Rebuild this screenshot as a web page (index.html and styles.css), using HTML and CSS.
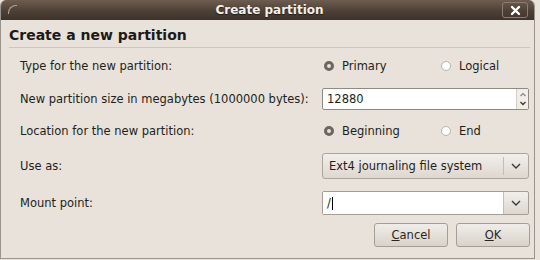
FILE: index.html
```html
<!DOCTYPE html>
<html lang="en">
  <head>
    <meta charset="UTF-8" />
    <title>Create partition</title>
    <link rel="stylesheet" href="styles.css">
  </head>
  <body>
    <div class="window">
      <div class="titlebar">
        <span class="corner"></span>
        <span class="title">Create partition</span>
        <span class="close">
          <svg width="11" height="11" viewBox="0 0 11 11">
            <path d="M2 2 L9 9 M9 2 L2 9" stroke="#fff" stroke-width="2.4" stroke-linecap="round" />
          </svg>
        </span>
      </div>
      <div class="content">
        <h1>Create a new partition</h1>
        <div class="form">
          <div class="label">Type for the new partition:</div>
          <div class="control radios">
            <label class="radio"><span class="dot on"></span>Primary</label>
            <label class="radio"><span class="dot"></span>Logical</label>
          </div>

          <div class="label">New partition size in megabytes (1000000 bytes):</div>
          <div class="control">
            <div class="spin">
              <span class="value">12880</span>
              <span class="arrows">
                <svg width="8" height="18" viewBox="0 0 8 18">
                  <path d="M1.5 6 L4 3.5 L6.5 6" fill="none" stroke="#8a867f" stroke-width="1.2" />
                  <path d="M1.5 12 L4 14.5 L6.5 12" fill="none" stroke="#3c3a36" stroke-width="1.4" />
                </svg>
              </span>
            </div>
          </div>

          <div class="label">Location for the new partition:</div>
          <div class="control radios">
            <label class="radio"><span class="dot on"></span>Beginning</label>
            <label class="radio"><span class="dot"></span>End</label>
          </div>

          <div class="label">Use as:</div>
          <div class="control">
            <div class="combo">
              <span class="value">Ext4 journaling file system</span>
              <span class="drop">
                <svg width="10" height="6" viewBox="0 0 10 6">
                  <path d="M1 1 L5 5 L9 1" fill="none" stroke="#3c3a36" stroke-width="1.4" />
                </svg>
              </span>
            </div>
          </div>

          <div class="label">Mount point:</div>
          <div class="control">
            <div class="entry-combo">
              <span class="value">/<span class="caret"></span></span>
              <span class="drop">
                <svg width="10" height="6" viewBox="0 0 10 6">
                  <path d="M1 1 L5 5 L9 1" fill="none" stroke="#3c3a36" stroke-width="1.4" />
                </svg>
              </span>
            </div>
          </div>
        </div>
        <div class="buttons">
          <button class="btn"><u>C</u>ancel</button>
          <button class="btn"><u>O</u>K</button>
        </div>
      </div>
    </div>
  </body>
</html>
```

FILE: styles.css
```css
body {
  margin: 0;
  background: #e9e3db;
  font-family: "DejaVu Sans", sans-serif;
  color: #221f1b;
}
.window {
  width: 533px;
  height: 258px;
  border: 1px solid #9a948c;
  border-top: none;
  border-radius: 6px 6px 0 0;
  background: #e8e2da;
  overflow: hidden;
}
.titlebar {
  height: 20px;
  position: relative;
  background: linear-gradient(#6e5d50, #4d4036 55%, #3e332b);
  display: flex;
  align-items: center;
  justify-content: center;
}
.corner {
  position: absolute;
  left: 7px;
  top: 5px;
  width: 8px;
  height: 8px;
  border-top: 1px solid #b0a498;
  border-left: 1px solid #b0a498;
  border-radius: 8px 0 0 0;
}
.title {
  color: #f4f0ea;
  font-weight: bold;
  font-size: 12px;
  text-shadow: 0 1px 1px #201a15;
  margin-left: 4px;
}
.close {
  position: absolute;
  right: 6px;
  top: 2px;
  width: 26px;
  height: 16px;
  border: 1px solid #8c7d70;
  border-radius: 3px;
  box-sizing: border-box;
  display: flex;
  align-items: center;
  justify-content: center;
}
.content {
  padding: 0 4px 0 8px;
}
h1 {
  margin: 0;
  padding-top: 7px;
  font-size: 14px;
  height: 20px;
  color: #1c1a17;
  border-bottom: 1px solid #cdc6bd;
}
.form {
  display: grid;
  grid-template-columns: 313px 207px;
  grid-template-rows: 31px 35px 29px 41px 34px;
  align-items: center;
  font-size: 11.5px;
  margin-top: 2px;
}
.label {
  padding-left: 11px;
  white-space: nowrap;
}
.radios {
  display: flex;
}
.radio {
  display: flex;
  align-items: center;
  flex: 0 0 115px;
  padding-left: 2px;
}
.dot {
  width: 10px;
  height: 10px;
  border-radius: 50%;
  border: 1px solid #bab3aa;
  background: #fff;
  box-sizing: border-box;
  margin-right: 8px;
}
.dot.on {
  border: 3px solid #6b665f;
  background: #e6e1da;
}
.spin,
.entry-combo,
.combo {
  display: flex;
  align-items: stretch;
  box-sizing: border-box;
}
.spin {
  height: 22px;
  border: 1px solid #8f8a83;
  border-radius: 2px;
  background: #fff;
}
.spin .value,
.entry-combo .value {
  flex: 1;
  padding-left: 4px;
  display: flex;
  align-items: center;
}
.arrows {
  width: 11px;
  border-left: 1px solid #d3cec7;
  background: #f1eeea;
  display: flex;
  align-items: center;
  justify-content: center;
}
.combo {
  height: 26px;
  border: 1px solid #aca59c;
  border-radius: 3px;
  background: linear-gradient(#f2efeb, #ddd7cf);
}
.combo .value {
  flex: 1;
  padding-left: 6px;
  display: flex;
  align-items: center;
}
.drop {
  width: 24px;
  display: flex;
  align-items: center;
  justify-content: center;
  border-left: 1px solid #c4bdb4;
  margin: 3px 0;
}
.entry-combo {
  height: 24px;
  border: 1px solid #a49e96;
  border-radius: 2px;
  background: linear-gradient(#f2efeb, #ddd7cf);
}
.entry-combo .value {
  background: #fff;
  border-right: 1px solid #c4bdb4;
}
.entry-combo .drop {
  border-left: none;
  margin: 0;
}
.caret {
  display: inline-block;
  width: 1px;
  height: 13px;
  background: #000;
  margin-left: 1px;
}
.buttons {
  display: flex;
  justify-content: flex-end;
  gap: 8px;
  margin-top: 3px;
}
.btn {
  width: 74px;
  height: 24px;
  border: 1px solid #a59e95;
  border-radius: 3px;
  background: linear-gradient(#f0ede9, #d9d2c9);
  font-family: "DejaVu Sans", sans-serif;
  font-size: 11.5px;
  color: #2a2824;
  padding: 0;
}
```
